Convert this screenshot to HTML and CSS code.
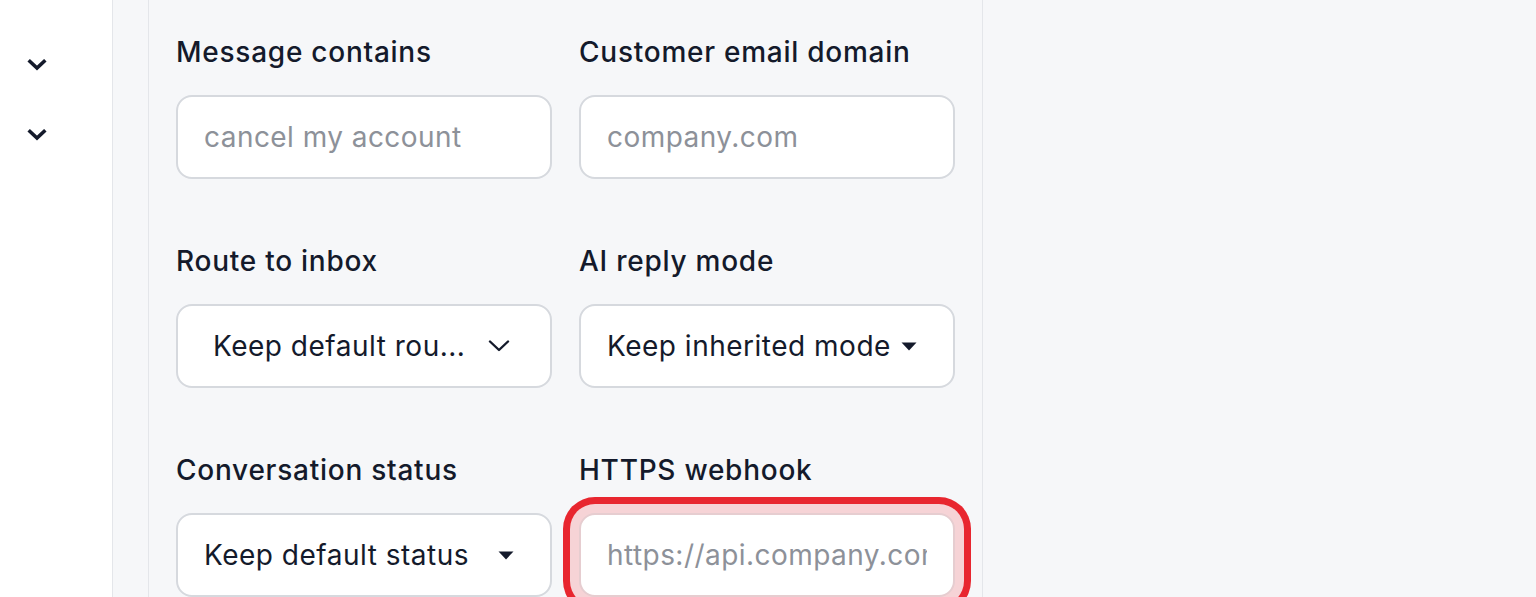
FILE: index.html
```html
<!DOCTYPE html>
<html lang="en">
<head>
<meta charset="utf-8">
<title>Rule conditions</title>
<link rel="stylesheet" href="styles.css">
</head>
<body>
<div class="app">
  <aside class="nav">
    <button class="nav-toggle" aria-label="Expand">
      <svg viewBox="0 0 20 12" width="20" height="12"><path d="M3 2.5 L10 9 L17 2.5" fill="none" stroke="#141a2b" stroke-width="3.6" stroke-linecap="square" stroke-linejoin="miter"/></svg>
    </button>
    <button class="nav-toggle" aria-label="Expand">
      <svg viewBox="0 0 20 12" width="20" height="12"><path d="M3 2.5 L10 9 L17 2.5" fill="none" stroke="#141a2b" stroke-width="3.6" stroke-linecap="square" stroke-linejoin="miter"/></svg>
    </button>
  </aside>
  <div class="rail"></div>
  <main class="panel">
    <div class="form-grid">
      <div class="field">
        <label class="label">Message contains</label>
        <input class="control" type="text" placeholder="cancel my account">
      </div>
      <div class="field">
        <label class="label">Customer email domain</label>
        <input class="control" type="text" placeholder="company.com">
      </div>
      <div class="field">
        <label class="label">Route to inbox</label>
        <div class="control select select-custom">
          <span class="select-text">Keep default rou...</span>
          <svg class="chev" viewBox="0 0 22 12" width="22" height="12"><path d="M2 1.5 L11 10 L20 1.5" fill="none" stroke="#141a2b" stroke-width="2.4" stroke-linecap="round" stroke-linejoin="round"/></svg>
        </div>
      </div>
      <div class="field">
        <label class="label">AI reply mode</label>
        <div class="control select">
          <span class="select-text">Keep inherited mode</span>
          <svg class="tri" viewBox="0 0 16 9" width="16" height="9"><path d="M0.5 0.5 H15.5 L8 8.5 Z" fill="#141a2b"/></svg>
        </div>
      </div>
      <div class="field">
        <label class="label">Conversation status</label>
        <div class="control select">
          <span class="select-text">Keep default status</span>
          <svg class="tri" viewBox="0 0 16 9" width="16" height="9"><path d="M0.5 0.5 H15.5 L8 8.5 Z" fill="#141a2b"/></svg>
        </div>
      </div>
      <div class="field">
        <label class="label">HTTPS webhook</label>
        <input class="control highlighted" type="text" placeholder="https://api.company.com/webhook">
      </div>
    </div>
  </main>
  <div class="outside"></div>
</div>
</body>
</html>
```
FILE: styles.css
```css
* { box-sizing: border-box; }
html, body {
  margin: 0;
  padding: 0;
  height: 100%;
  overflow: hidden;
}
body {
  background: #f6f7f9;
  font-family: Inter, "Noto Sans", "Liberation Sans", sans-serif;
  color: #141a2b;
}
.app {
  display: flex;
  height: 597px;
}
.nav {
  width: 113px;
  flex: none;
  background: #ffffff;
  border-right: 1px solid #e4e6ea;
  display: flex;
  flex-direction: column;
  align-items: flex-start;
  padding-top: 59px;
  padding-left: 27px;
  gap: 58px;
}
.nav-toggle {
  border: 0;
  background: none;
  padding: 0;
  width: 20px;
  height: 12px;
  display: block;
}
.nav-toggle svg { display: block; }
.rail {
  width: 36px;
  flex: none;
  background: #f6f7f9;
  border-right: 1px solid #e4e6ea;
}
.panel {
  width: 834px;
  flex: none;
  background: #f6f7f9;
  border-right: 1px solid #e4e6ea;
  padding: 35px 27px 0 27px;
}
.outside {
  flex: 1;
  background: #f6f7f9;
}
.form-grid {
  display: grid;
  grid-template-columns: 376px 376px;
  column-gap: 27px;
  row-gap: 65px;
}
.field {
  display: flex;
  flex-direction: column;
  gap: 26px;
}
.label {
  font-size: 28px;
  line-height: 34px;
  font-weight: 500;
  color: #141a2b;
  letter-spacing: 0.75px;
}
.control {
  height: 84px;
  width: 376px;
  border: 2px solid #d6d9de;
  border-radius: 16px;
  background: #ffffff;
  font-family: inherit;
  font-size: 28px;
  letter-spacing: 0.45px;
  color: #141a2b;
  padding: 0 26px;
  outline: none;
}
.control::placeholder {
  color: #8d9199;
  opacity: 1;
}
.select {
  display: flex;
  align-items: center;
  justify-content: space-between;
  padding: 0 36px 0 26px;
}
.select-text {
  white-space: nowrap;
  font-size: 28px;
  line-height: 34px;
  letter-spacing: 0.5px;
}
.select-custom {
  padding: 0 40px 0 35px;
}
.chev { display: block; }
.tri { display: block; }
.highlighted {
  border-color: #e6cdd0;
  box-shadow: 0 0 0 9px #f6d3d6, 0 0 0 16px #e8262f;
  border-radius: 16px;
}
```
